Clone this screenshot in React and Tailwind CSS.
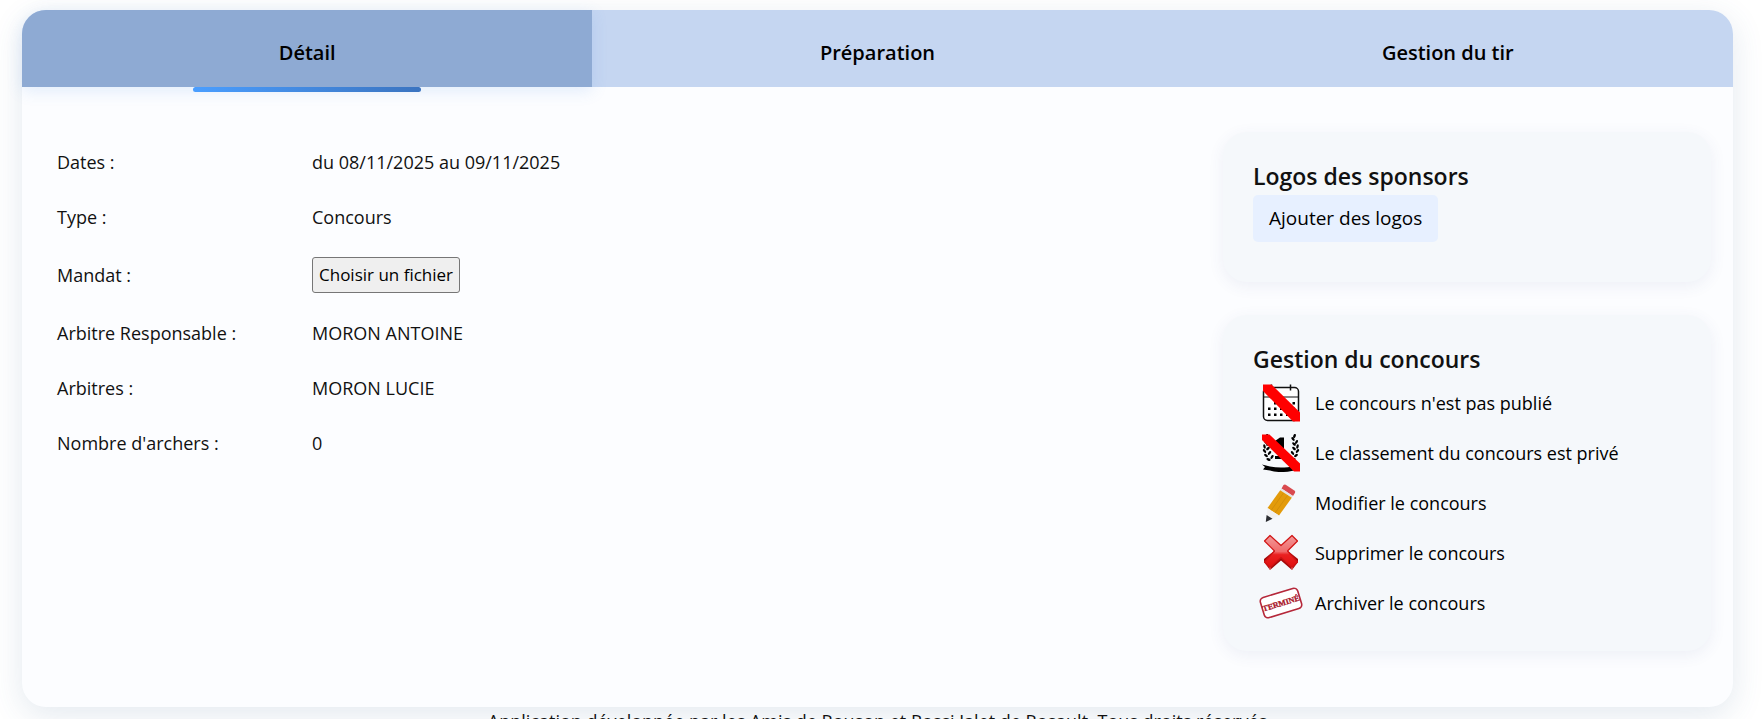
import React, { useState } from 'react';

const tabs = ['Détail', 'Préparation', 'Gestion du tir'];

const CalendarIcon = () => (
  <svg width="38" height="38" viewBox="0 0 38 38">
    <path d="M5.500 3.500h27a4 4 0 0 1 4 4v25a4 4 0 0 1-4 4h-27a4 4 0 0 1-4-4v-25a4 4 0 0 1 4-4z" fill="#fff" stroke="#111" strokeWidth="1.500" />
    <path d="M1.500 13h35" stroke="#111" strokeWidth="1.200" />
    <path d="M9.500 0.500v6M28.500 0.500v6" stroke="#111" strokeWidth="1.500" />
    <g fill="#000">
      <path d="M12 18h2.500v2.500H12zM18 18h2.500v2.500H18zM24 18h2.500v2.500H24zM30.500 18h2.500v2.500h-2.500z" />
      <path d="M6 23.500h2.500V26H6zM12 23.500h2.500V26H12zM18 23.500h2.500V26H18zM24 23.500h2.500V26H24zM30.500 23.500h2.500V26h-2.500z" />
      <path d="M6 29.500h2.500V32H6zM12 29.500h2.500V32H12zM18 29.500h2.500V32H18zM24 29.500h2.500V32H24z" />
    </g>
    <path d="M1 .5h8.500L38 28.500v9h-7L1 7z" fill="#f00" />
  </svg>
);

const leaves = [
  [3.5, 8, 60], [2.5, 12.5, 75], [2.5, 17, 50], [4, 21.5, 35], [6.500, 25.500, 20],
  [7, 5, -50], [6, 10, -40], [6, 14.500, -40], [7.500, 19, -50], [10, 23, -60], [5.500, 2, 70],
];

const RankingIcon = () => (
  <svg width="38" height="38" viewBox="0 0 38 38">
    <g>
      {leaves.map(([x, y, a]) => (
        <ellipse key={`${x}-${y}`} cx={x} cy={y} rx="2.200" ry="1.200" transform={`rotate(${a} ${x} ${y})`} />
      ))}
      {leaves.map(([x, y, a]) => (
        <ellipse key={`r${x}-${y}`} cx={38 - x} cy={y} rx="2.200" ry="1.200" transform={`rotate(${-a} ${38 - x} ${y})`} />
      ))}
    </g>
    <path d="M13 7l5-3.500h4V22h3v3H13v-3h3V9l-3 1z" />
    <path d="M0 30.500l6 1.500c8 2 18 2 26 0l5-1v4c-9 3.500-22 4-29 1.500l-7-1 2-2.500z" />
    <path d="M0 .5h7.500L38 29.500v8h-6L0 6z" fill="#f00" />
  </svg>
);

const PencilIcon = () => (
  <svg width="38" height="38" viewBox="0 0 38 38">
    <path d="M21.500 1q1-1 2.200-.3l9 6q1 .8.300 2L31 12 19.500 4.500z" fill="#d94a4f" />
    <path d="M19.500 4.500L31 12l-1.200 1.800L18.200 6.300z" fill="#e4e4e4" />
    <path d="M18.200 6.300L29.800 13.800 17 31.500 5.500 24z" fill="#e39b0a" />
    <path d="M21.500 9L9 26.500M25.500 11.500L13 29" stroke="#cf8b09" strokeWidth=".8" />
    <path d="M5.500 24L17 31.500 4 37.500z" fill="#f1f1f1" />
    <path d="M4.600 31L10.500 34.800 3.800 38z" fill="#2b2d31" />
  </svg>
);

const CrossIcon = () => (
  <svg width="38" height="38" viewBox="0 0 38 38">
    <defs>
      <linearGradient id="cross" x1="0" y1="0" x2="0" y2="1">
        <stop offset="0" stopColor="#f29a9a" />
        <stop offset=".5" stopColor="#f06a6a" />
        <stop offset=".6" stopColor="#ea2020" />
        <stop offset="1" stopColor="#e00f0f" />
      </linearGradient>
    </defs>
    <path d="M2 28l6 8 11-9.500L30 36l6-8v-3L26 17H12L2 25z" fill="#a40808" />
    <path d="M8 1.500L19 11.500 30 1.500l5.500 5.500L25.500 17 35.500 28 30 33.500 19 23.500 8 33.500 2.500 28 12.500 17 2.500 7z" fill="url(#cross)" stroke="#d01414" strokeWidth="1.200" strokeLinejoin="round" />
    <path d="M8 33.500V36M30 33.500V36" stroke="#f28080" strokeWidth="1" />
  </svg>
);

const StampIcon = () => (
  <svg width="44" height="38" viewBox="0 0 44 38">
    <g transform="rotate(-17 22 19)">
      <rect x="2.500" y="8.500" width="39" height="21" rx="4" fill="#fff" stroke="#b5283a" strokeWidth="1.600" />
      <text x="22" y="22" textAnchor="middle" fontFamily="Liberation Serif, serif" fontWeight="700" fontSize="8" fill="#a81226" stroke="#a81226" strokeWidth=".3">TERMINÉ</text>
    </g>
  </svg>
);

const actions = [
  { label: "Le concours n'est pas publié", Icon: CalendarIcon },
  { label: 'Le classement du concours est privé', Icon: RankingIcon },
  { label: 'Modifier le concours', Icon: PencilIcon },
  { label: 'Supprimer le concours', Icon: CrossIcon },
  { label: 'Archiver le concours', Icon: StampIcon },
];

const Row = ({ label, children }) => (
  <div className="grid grid-cols-[255px_1fr] items-center">
    <dt>{label}</dt>
    <dd>{children}</dd>
  </div>
);

const Card = ({ title, children }) => (
  <section className="rounded-3xl bg-[#f5f8fb] px-[30px] pt-[25px] shadow-[0_4px_16px_rgba(60,80,140,0.08)]">
    <h2 className="text-[23px] leading-[38px] font-semibold text-[#111]">{title}</h2>
    {children}
  </section>
);

const App = () => {
  const [active, setActive] = useState('Détail');

  return (
    <div className="h-screen overflow-hidden bg-white pt-[10px] pr-[30px] pl-[22px] font-['Open_Sans',sans-serif] text-lg text-[#111]">
      <main className="rounded-3xl bg-[#fcfdff] shadow-[0_8px_32px_rgba(60,100,140,0.14)]">
        <div role="tablist" className="grid grid-cols-3 rounded-t-3xl bg-[#c5d6f1]">
          {tabs.map((tab) => (
            <button
              key={tab}
              type="button"
              role="tab"
              aria-selected={active === tab}
              onClick={() => setActive(tab)}
              className={`relative h-[77px] cursor-pointer pt-2 text-xl font-semibold text-black first:rounded-tl-3xl last:rounded-tr-3xl ${
                active === tab ? 'bg-[#8eaad3] shadow-[0_4px_16px_rgba(74,144,226,0.15)]' : ''
              }`}
            >
              {tab}
              {active === tab && (
                <span className="absolute top-full left-[30%] h-[5px] w-2/5 rounded-[3px] bg-gradient-to-r from-[#4a9eff] to-[#3b74c0]" />
              )}
            </button>
          ))}
        </div>

        <div className="flex items-start justify-between pt-[45px] pr-[22px] pb-14 pl-[35px]">
          <dl className="flex flex-1 flex-col gap-[25px] pt-[15px] leading-[30px]">
            <Row label="Dates :">du 08/11/2025 au 09/11/2025</Row>
            <Row label="Type :">Concours</Row>
            <Row label="Mandat :">
              <button type="button" className="block h-9 cursor-pointer rounded-[3px] border border-[#767676] bg-[#efefef] px-[6px] text-[17px] leading-8 text-black">
                Choisir un fichier
              </button>
            </Row>
            <Row label="Arbitre Responsable :">MORON ANTOINE</Row>
            <Row label="Arbitres :">MORON LUCIE</Row>
            <Row label="Nombre d'archers :">0</Row>
          </dl>

          <aside className="flex w-[30%] max-w-[488px] flex-col gap-[33px]">
            <Card title="Logos des sponsors">
              <button type="button" className="mb-10 block h-[47px] cursor-pointer rounded-[5px] bg-[#e7f0ff] px-4 text-[19px] text-black">
                Ajouter des logos
              </button>
            </Card>
            <Card title="Gestion du concours">
              <ul className="pb-[23px]">
                {actions.map(({ label, Icon }) => (
                  <li key={label}>
                    <button type="button" className="flex h-[50px] cursor-pointer items-center gap-1.5 text-black">
                      <span className="flex w-14 justify-center">
                        <Icon />
                      </span>
                      {label}
                    </button>
                  </li>
                ))}
              </ul>
            </Card>
          </aside>
        </div>
      </main>
      <footer className="text-center leading-7">
        Application développée par les Amis de Rouson et Rossi Jalet de Rosault. Tous droits réservés
      </footer>
    </div>
  );
};

export default App;
